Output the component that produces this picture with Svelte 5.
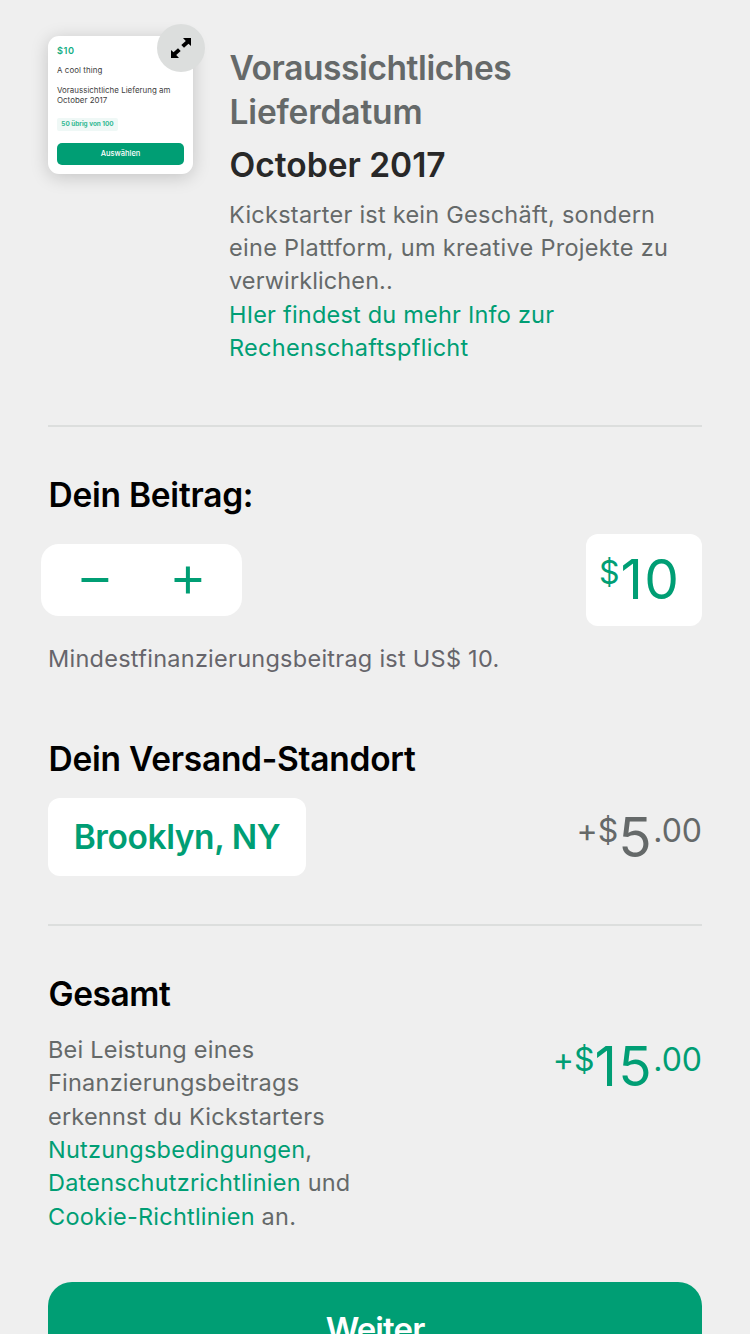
<script>
  const terms = [
    [{ text: 'Bei Leistung eines' }],
    [{ text: 'Finanzierungsbeitrags' }],
    [{ text: 'erkennst du Kickstarters' }],
    [{ text: 'Nutzungsbedingungen', link: true }, { text: ',' }],
    [{ text: 'Datenschutzrichtlinien', link: true }, { text: ' und' }],
    [{ text: 'Cookie-Richtlinien', link: true }, { text: ' an.' }]
  ];
</script>

<main class="page">
  <section class="reward">
    <div class="thumb">
      <div class="t-amount">$10</div>
      <div class="t-title">A cool thing</div>
      <div class="t-date">Voraussichtliche Lieferung am<br />October 2017</div>
      <div class="t-left">50 übrig von 100</div>
      <div class="t-button">Auswählen</div>
      <div class="expand">
        <svg width="20" height="20" viewBox="0 0 20 20">
          <path d="M12 0H20V8L17.500 5.700L13 9.700L10.300 7L14.800 2.900Z" />
          <path d="M8 20H0V12L2.500 14.300L7 10.300L9.700 13L5.200 17.100Z" />
        </svg>
      </div>
    </div>
    <div class="delivery">
      <h1 class="heading label"><span class="line wide">Voraussichtliches</span><span class="line wider">Lieferdatum</span></h1>
      <h2 class="heading date">October 2017</h2>
      <p class="body">
        <span class="line tight">Kickstarter ist kein Geschäft, sondern</span>
        <span class="line">eine Plattform, um kreative Projekte zu</span>
        <span class="line tighter">verwirklichen..</span>
        <span class="line link-snug link">HIer findest du mehr Info zur</span>
        <span class="line link">Rechenschaftspflicht</span>
      </p>
    </div>
  </section>

  <hr />

  <section class="pledge">
    <h2 class="heading h-pledge">Dein Beitrag:</h2>
    <div class="row">
      <div class="stepper">
        <svg width="201" height="72" viewBox="0 0 201 72">
          <path d="M40.500 36H67.300M133.500 36H160.300M146.900 22.600V49.400" />
        </svg>
      </div>
      <div class="amount"><span class="price"><span class="small">$</span><span class="big">10</span></span></div>
    </div>
    <p class="body note">Mindestfinanzierungsbeitrag ist US$ 10.</p>
  </section>

  <section class="shipping">
    <h2 class="heading h-ship">Dein Versand-Standort</h2>
    <div class="row">
      <div class="location">Brooklyn, NY</div>
      <span class="price grey"><span class="small plus">+</span><span class="small">$</span><span class="big">5</span><span class="small cents">.00</span></span>
    </div>
  </section>

  <hr />

  <section class="total">
    <h2 class="heading h-total">Gesamt</h2>
    <div class="row top">
      <p class="body terms">
        {#each terms as line}
          <span class="line">{#each line as part}<span class:link={part.link}>{part.text}</span>{/each}</span>
        {/each}
      </p>
      <span class="price"><span class="small plus">+</span><span class="small">$</span><span class="big">15</span><span class="small cents">.00</span></span>
    </div>
  </section>

  <button class="next">Weiter</button>
</main>

<style>
  :global(body) { margin: 0; background: #efefef; overflow: hidden; }
  .page {
    box-sizing: border-box;
    width: 750px;
    height: 1334px;
    overflow: hidden;
    padding: 36px 48px 0;
    background: #efefef;
    font-family: Inter, "Liberation Sans", sans-serif;
    color: #000;
    display: flex;
    flex-direction: column;
  }
  h1, h2, p { margin: 0; }
  hr { width: 100%; height: 2px; margin: 0; border: 0; background: #dcdedd; flex: none; }
  .heading {
    padding-left: 0.6px;
    font-size: 33.5px;
    line-height: 44px;
    font-weight: 600;
    white-space: nowrap;
    letter-spacing: -0.26px;
  }
  .body { font-size: 23.5px; line-height: 33.3px; color: #656969; white-space: nowrap; letter-spacing: 0.3px; }
  .line { display: block; white-space: pre; }
  .tight { letter-spacing: 0.25px; }
  .tighter { letter-spacing: 0.1px; }
  .link-snug { letter-spacing: 0.21px; }
  .wide { letter-spacing: -0.42px; }
  .wider { letter-spacing: -0.18px; }
  .link { color: #009e74; }

  .reward { display: flex; height: 389px; flex: none; }
  .thumb {
    position: relative;
    box-sizing: border-box;
    width: 145px;
    height: 138px;
    flex: none;
    padding: 9px 9px 0;
    border-radius: 11px;
    background: #fff;
    box-shadow: 0 3px 18px rgba(0, 0, 0, 0.18);
    color: #404040;
    font-size: 7.9px;
    line-height: 10.5px;
    white-space: nowrap;
  }
  .t-amount { font-size: 9.2px; line-height: 12px; font-weight: 600; letter-spacing: 0.6px; color: #13ad82; }
  .t-title { margin-top: 8px; letter-spacing: 0.08px; }
  .t-date { margin-top: 9px; letter-spacing: 0.03px; }
  .t-left {
    box-sizing: border-box;
    width: 61px;
    height: 13px;
    margin-top: 12.5px;
    border-radius: 2px;
    background: #eff8f6;
    color: #32b993;
    font-size: 6.4px;
    line-height: 13px;
    font-weight: 700;
    text-align: center;
  }
  .t-button {
    height: 22px;
    margin-top: 12px;
    border-radius: 5px;
    background: #009e74;
    color: #fff;
    font-size: 7.5px;
    line-height: 22px;
    font-weight: 500;
    text-align: center;
  }
  .expand {
    position: absolute;
    top: -12px;
    right: -12px;
    width: 48px;
    height: 48px;
    border-radius: 50%;
    background: #dcdedd;
    display: flex;
    align-items: center;
    justify-content: center;
  }
  .delivery { margin-left: 36px; padding-top: 10px; }
  .label { color: #656969; }
  .date { margin-top: 9px; color: #282828; letter-spacing: 0; }
  .delivery .body { margin-top: 10.7px; }

  .pledge { padding-top: 46px; }
  .row { display: flex; align-items: center; justify-content: space-between; }
  .pledge .row { margin-top: 17px; height: 92px; }
  .stepper { width: 201px; height: 72px; margin-left: -7px; border-radius: 18px; background: #fff; }
  .stepper svg { display: block; }
  .stepper path { stroke: #009e74; stroke-width: 4; fill: none; }
  .amount {
    box-sizing: border-box;
    width: 116px;
    height: 92px;
    padding: 10px 21.5px 0 0;
    border-radius: 12px;
    background: #fff;
    text-align: right;
  }
  .amount .small { letter-spacing: 0.8px; }
  .note { margin-top: 16px; height: 33px; color: #66656b; letter-spacing: 0.26px; }
  .price { color: #009e74; white-space: nowrap; line-height: 70px; }
  .grey { color: #656969; }
  .big { font-size: 55px; letter-spacing: 1.5px; }
  .small { font-size: 32px; line-height: 1; vertical-align: 15px; }
  .amount .small { vertical-align: 15px; }

  .shipping { padding-top: 62px; }
  .shipping .row { margin-top: 17px; height: 78px; margin-bottom: 48px; }
  .shipping .price { padding-top: 14px; }
  .location {
    width: 258px;
    height: 78px;
    border-radius: 12px;
    background: #fff;
    color: #009e74;
    font-size: 33.5px;
    line-height: 78px;
    font-weight: 600;
    letter-spacing: -0.4px;
    text-align: center;
  }

  .total { padding-top: 46px; }
  .h-total { letter-spacing: -0.45px; }
  .top { margin-top: 16.7px; align-items: flex-start; height: 249.300px; }
  .top .price { margin-top: -2px; }
  .terms { line-height: 33.4px; letter-spacing: 0.22px; }
  .next {
    flex: none;
    height: 95px;
    padding: 0;
    border: 0;
    border-radius: 24px;
    background: #009e74;
    color: #fff;
    font: 600 33px/95px Inter, "Liberation Sans", sans-serif;
    letter-spacing: -0.9px;
    text-align: center;
  }
</style>
